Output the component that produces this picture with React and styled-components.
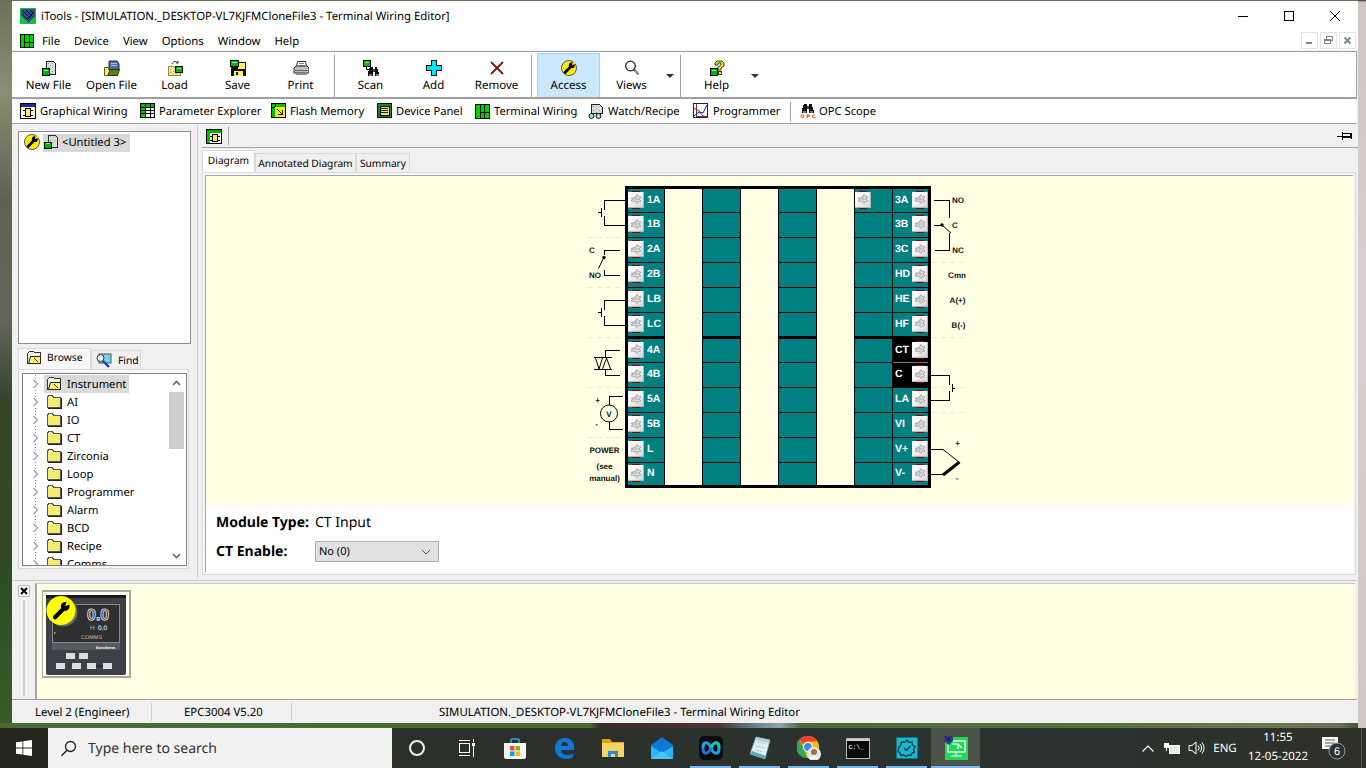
import React from 'react'
import styled, { createGlobalStyle } from 'styled-components'

const GlobalStyle = createGlobalStyle`
  html, body { margin: 0; padding: 0; overflow: hidden; }
  body {
    font-family: "Noto Sans", "Open Sans", sans-serif;
    font-size: 11.5px;
    color: #000;
    text-rendering: geometricPrecision;
  }
  * { box-sizing: border-box; }
`

const UI_FONT = '"Noto Sans", "Open Sans", sans-serif'
const CREAM = '#ffffe4'
const TEAL = '#008080'
const LINE = '#a0a0a0'

const Page = styled.div`
  width: 1366px;
  height: 768px;
  display: flex;
  flex-direction: column;
  overflow: hidden;
`

const Desktop = styled.div`
  height: 728px;
  padding: 1px 8px 5px 12px;
  background:
    linear-gradient(90deg, #4d6a33 0, #4a6a2e 590px, #3b2a26 600px, #4a3630 720px, #5f7788 750px, #8fa6b0 780px, #52683a 800px, #586f3b 1100px, #6c7a52 1280px, #706a60 1340px, transparent 1358px) 0 723px / 100% 5px no-repeat,
    linear-gradient(180deg, #2b2a20 0, #cfc5c3 2px, #d8cfd0 300px, #cfc8c4 728px) 1358px 0 / 8px 100% no-repeat,
    linear-gradient(180deg, #6d7157 0, #8b8d74 90px, #5e6350 200px, #62665a 320px, #35452a 400px, #2f4a22 560px, #3b5b2a 728px);
`

const Window = styled.div`
  height: 722px;
  background: #f0f0f0;
  display: flex;
  flex-direction: column;
`

const TitleBar = styled.div`
  height: 30px;
  background: #fff;
  display: flex;
  align-items: center;
  padding-left: 8px;
  font: 11.4px ${UI_FONT};
`

const TitleText = styled.span`
  margin-left: 5px;
`

const WindowControls = styled.div`
  margin-left: auto;
  display: flex;
  height: 100%;
`

const ControlButton = styled.div`
  width: 46px;
  height: 100%;
  display: flex;
  align-items: center;
  justify-content: center;
`

const MenuBar = styled.div`
  height: 19px;
  background: #fff;
  display: flex;
  align-items: center;
  padding-left: 8px;
  font: 11.3px ${UI_FONT};
`

const MenuItems = styled.div`
  display: flex;
  gap: 14px;
  margin-left: 8px;
  padding-top: 1px;
`

const MdiButtons = styled.div`
  margin-left: auto;
  display: flex;
  gap: 2px;
  margin-right: 2px;
`

const MdiButton = styled.div`
  width: 17px;
  height: 17px;
  border: 1px solid #e3e3e3;
  display: flex;
  align-items: center;
  justify-content: center;
`

const MainToolbar = styled.div`
  margin-top: 1px;
  height: 47px;
  margin-right: 1px;
  background: #fff;
  border: 1px solid ${LINE};
  border-left: 0;
  border-bottom: 0;
  display: flex;
  padding: 1px 0 0 5px;
  font-family: ${UI_FONT};
`

const ToolButton = styled.div`
  width: 63px;
  height: 45px;
  padding-top: 6px;
  display: flex;
  flex-direction: column;
  align-items: center;
  gap: 2px;
  border: 1px solid ${p => (p.$active ? '#99d1ff' : 'transparent')};
  background: ${p => (p.$active ? '#cce8ff' : 'transparent')};
`

const ToolSep = styled.div`
  width: 1px;
  height: 42px;
  margin: 2px ${p => p.$r}px 0 ${p => p.$l}px;
  background: ${LINE};
`

const Caret = styled.div`
  width: 12px;
  margin-left: 1px;
  display: flex;
  justify-content: center;
  padding-top: 21px;

  &::after {
    content: '';
    width: 0;
    height: 0;
    border-left: 4px solid transparent;
    border-right: 4px solid transparent;
    border-top: 4px solid #333;
  }
`

const ViewToolbar = styled.div`
  height: 26px;
  margin-right: 1px;
  background: #fff;
  border-top: 1px solid ${LINE};
  border-bottom: 1px solid ${LINE};
  box-shadow: 0 -1px 0 ${LINE};
  display: flex;
  align-items: center;
  padding-left: 8px;
  gap: 12px;
  font: 11.2px ${UI_FONT};
`

const ViewItem = styled.div`
  width: ${p => p.$w}px;
  display: flex;
  align-items: center;
  gap: ${p => p.$gap}px;
  white-space: nowrap;

  span { padding-top: 1px; }
`

const ViewSep = styled.div`
  width: 1px;
  height: 19px;
  margin: 0 -3px 0 -2px;
  background: ${LINE};
`

const Work = styled.div`
  height: 454px;
  display: flex;
`

const LeftPane = styled.div`
  width: 185px;
  padding: 7px 0 0 6px;
  font: 11.2px ${UI_FONT};
`

const TreeBox = styled.div`
  width: 173px;
  height: 213px;
  background: #fff;
  border: 1px solid #8c8c8c;
  padding: 2px 0 0 5px;
  display: flex;
  align-items: flex-start;
`

const TreeRoot = styled.div`
  display: flex;
  align-items: flex-start;
  gap: 3px;
  height: 19px;
`

const RootLabel = styled.div`
  height: 18px;
  width: 87px;
  background: #d9d9d9;
  display: flex;
  align-items: center;
  gap: 3px;
  padding: 0 0 1px 1px;
  white-space: nowrap;
`

const TabStrip = styled.div`
  display: flex;
  align-items: flex-end;
  height: 21px;
  margin-top: 4px;
  font-size: 10.3px;
`

const SideTab = styled.div`
  width: ${p => p.$w}px;
  height: ${p => (p.$active ? 21 : 19)}px;
  display: flex;
  align-items: center;
  gap: ${p => p.$gap}px;
  padding: ${p => (p.$active ? 0 : 1)}px 0 ${p => (p.$active ? 2 : 0)}px ${p => p.$pad}px;
  background: ${p => (p.$active ? '#f8f8f8' : '#f0f0f0')};
  border: 1px solid #d9d9d9;
  border-bottom: 0;
`

const SideTabBody = styled.div`
  width: 171px;
  height: 200px;
  border: 1px solid #d9d9d9;
  background: #f8f8f8;
  padding: 3px;
`

const TreeList = styled.div`
  width: 165px;
  height: 193px;
  background: #fff;
  border: 1px solid #808080;
  display: flex;
  overflow: hidden;
`

const TreeRows = styled.div`
  flex: 1;
  padding: 1px 0 0 7px;
  overflow: hidden;
`

const TreeRow = styled.div`
  height: 18px;
  display: flex;
  align-items: center;
`

const Expander = styled.div`
  width: 10px;
  height: 18px;
  display: flex;
  align-items: center;
  justify-content: center;
  margin-right: 4px;
  background: repeating-linear-gradient(180deg, #808080 0 1px, transparent 1px 3px) 5px 0 / 1px 100% no-repeat;
`

const NodeLabel = styled.div`
  height: 18px;
  display: flex;
  align-items: center;
  gap: 5px;
  width: ${p => (p.$selected ? '85px' : 'auto')};
  padding-left: 2px;
  background: ${p => (p.$selected ? '#d9d9d9' : 'transparent')};
  white-space: nowrap;
`

const ScrollTrack = styled.div`
  width: 15px;
  margin-right: 2px;
  background: #fff;
  display: flex;
  flex-direction: column;
  align-items: stretch;
`

const ScrollArrow = styled.div`
  height: 18px;
  display: flex;
  align-items: center;
  justify-content: center;
`

const ScrollThumb = styled.div`
  height: 57px;
  background: #cdcdcd;
`

const ScrollRest = styled.div`
  flex: 1;
`

const RightPane = styled.div`
  flex: 1;
  border-left: 1px solid #cfcfcf;
  padding-left: 3px;
  display: flex;
  flex-direction: column;
  min-width: 0;
`

const MiniToolbar = styled.div`
  height: 24px;
  margin-left: 1px;
  border-bottom: 1px solid ${LINE};
  display: flex;
  align-items: center;
  padding: 0 6px 0 4px;
`

const MiniSep = styled.div`
  width: 1px;
  height: 18px;
  margin-left: 6px;
  background: ${LINE};
`

const Pin = styled.div`
  margin-left: auto;
  display: flex;
`

const DocTabs = styled.div`
  height: 24px;
  display: flex;
  align-items: flex-end;
  padding-left: 1px;
  font-family: ${UI_FONT};
  font-size: 10.2px;
`

const DocTab = styled.div`
  height: ${p => (p.$active ? 22 : 19)}px;
  width: ${p => p.$w}px;
  display: flex;
  align-items: center;
  justify-content: center;
  padding-bottom: ${p => (p.$active ? 3 : 1)}px;
  background: ${p => (p.$active ? '#fff' : '#f0f0f0')};
  border: 1px solid #d9d9d9;
  border-bottom: 0;
  white-space: nowrap;
`

const DocPanel = styled.div`
  margin: 0 2px 0 1px;
  height: 403px;
  border: 1px solid #d9d9d9;
  padding: 2px;
  background: #f6f6f6;
`

const DocInner = styled.div`
  height: 100%;
  background: #fff;
  border-top: 1px solid #a8a8a8;
  border-left: 1px solid #a8a8a8;
  display: flex;
  flex-direction: column;
`

const DiagramArea = styled.div`
  height: 329px;
  background: ${CREAM};
  display: flex;
  justify-content: center;
  align-items: flex-start;
  padding: 10px 3px 0 0;
`

const Board = styled.div`
  width: 306px;
  height: 302px;
  flex: none;
  border: 3px solid #000;
  display: grid;
  grid-auto-flow: column;
  grid-template-columns: 37px 38px 38px 38px 38px 38px 38px 35px;
  grid-template-rows: 24px 25px 25px 25px 25px 26px 24px 25px 25px 25px 25px 22px;
  background: ${TEAL};
`

const Gap = styled.div`
  grid-row: 1 / -1;
  background: ${CREAM};
  border-right: 1px solid #000;
`

const Cell = styled.div`
  display: flex;
  align-items: center;
  justify-content: ${p => (p.$flip ? 'space-between' : 'flex-start')};
  background: ${p => (p.$black ? '#000' : TEAL)};
  border-bottom: ${p => (p.$row === 5 ? 3 : p.$row === 11 ? 0 : 1)}px solid ${p => (p.$sepGrey ? '#777' : '#000')};
  border-right: ${p => (p.$noRight ? 0 : 1)}px solid #000;
  color: #fff;
  font: bold 10.5px "Liberation Sans", Arial, sans-serif;
  padding: 0 0 2px ${p => (p.$flip ? 2 : 0)}px;
`

const CellLabel = styled.span`
  margin-left: ${p => (p.$flip ? 0 : 3)}px;
`

const Screw = styled.div`
  position: relative;
  width: 16px;
  height: 16px;
  flex: none;
  background: linear-gradient(135deg, #fff 0, #f2f2f2 50%, #d5d5d5 100%);
  border-right: 1px solid #b5b5b5;
  border-bottom: 1px solid #b5b5b5;
  display: flex;
  align-items: center;
  justify-content: center;

  &::before, &::after {
    content: '';
    position: absolute;
    left: 4px;
    width: 8px;
    height: 1px;
    background: #8b0000;
  }
  &::before { top: -1px; }
  &::after { bottom: -2px; }
`

const Wires = styled.svg`
  flex: none;
  display: block;
  overflow: visible;
  font-family: "Liberation Sans", Arial, sans-serif;
`

const InfoPanel = styled.div`
  flex: 1;
  padding: 7px 0 0 10px;
  font-family: ${UI_FONT};
`

const InfoRow = styled.div`
  display: flex;
  align-items: center;
  height: 21px;
  margin-bottom: 8px;
  font-size: 14px;
`

const InfoLabel = styled.span`
  width: 99px;
  font-weight: 700;
  white-space: nowrap;
`

const Select = styled.div`
  width: 124px;
  height: 21px;
  background: #e1e1e1;
  border: 1px solid #adadad;
  display: flex;
  align-items: center;
  justify-content: space-between;
  padding: 0 7px 0 3px;
  font-size: 11px;
`

const Dock = styled.div`
  height: 120px;
  margin-top: 2px;
  margin-right: 1px;
  border-top: 1px solid #c8c8c8;
  border-bottom: 1px solid ${LINE};
  display: flex;
`

const DockSide = styled.div`
  width: 23px;
  padding: 4px 0 0 6px;
  display: flex;
  flex-direction: column;
  gap: 3px;
`

const DockClose = styled.div`
  width: 12px;
  height: 12px;
  border: 1px solid #bdbdbd;
  background: #f5f5f5;
  display: flex;
  align-items: center;
  justify-content: center;
`

const DockGrip = styled.div`
  width: 2px;
  height: 96px;
  margin-left: 5px;
  background: #d0d0d0;
`

const DockBody = styled.div`
  flex: 1;
  margin: 2px 2px 0 0;
  background: ${CREAM};
  border-left: 2px solid #a8a8a8;
  border-top: 1px solid #c8c8c8;
  padding: 6px 0 0 5px;
`

const DeviceFrame = styled.div`
  width: 89px;
  height: 88px;
  padding: 3px 4px 3px 3px;
  border: 2px solid #a6a6a6;
  border-left-width: 1px;
  box-shadow: inset 1px 1px 0 #fff;
`

const StatusBar = styled.div`
  flex: 1;
  display: flex;
  align-items: center;
  font: 11.4px ${UI_FONT};
`

const StatusCell = styled.div`
  width: ${p => p.$w}px;
  height: 18px;
  display: flex;
  align-items: center;
  padding: 1px 0 0 ${p => p.$pad}px;
  border-right: ${p => (p.$plain ? 0 : 1)}px solid #d0d0d0;
  white-space: nowrap;
`

const Taskbar = styled.div`
  height: 40px;
  background: linear-gradient(90deg, #2a2e24 0, #2b302a 40%, #2b3331 70%, #2e3028 100%);
  display: flex;
  color: #fff;
`

const StartButton = styled.div`
  width: 48px;
  display: flex;
  align-items: center;
  justify-content: center;
  background: #23271d;
`

const SearchBox = styled.div`
  width: 344px;
  background: #f2f2f2;
  display: flex;
  align-items: center;
  gap: 11px;
  padding: 1px 0 0 12px;
  color: #333;
  font: 14px ${UI_FONT};
`

const TaskIcon = styled.div`
  position: relative;
  width: 49px;
  display: flex;
  align-items: center;
  justify-content: center;
  background: ${p => (p.$active ? '#4e5449' : 'transparent')};

  &::after {
    content: '';
    display: ${p => (p.$running ? 'block' : 'none')};
    position: absolute;
    bottom: 0;
    left: ${p => (p.$active ? 0 : 4)}px;
    right: ${p => (p.$active ? 0 : 4)}px;
    height: 2px;
    background: #76b9ed;
  }
`

const Tray = styled.div`
  margin-left: auto;
  display: flex;
  align-items: center;
  font: 11.5px ${UI_FONT};
`

const TraySlot = styled.div`
  width: ${p => p.$w}px;
  display: flex;
  align-items: center;
  justify-content: center;
`

const Clock = styled.div`
  width: 72px;
  padding-bottom: 2px;
  text-align: center;
  line-height: 19px;
`

const ShowDesktop = styled.div`
  width: 1px;
  height: 100%;
  margin: 0 4px 0 7px;
  background: #555;
`

/* ---- icons ---- */

const Icon = ({ size = 16, children, crisp = true, box = 16 }) => (
  <svg width={size} height={size} viewBox={`0 0 ${box} ${box}`} shapeRendering={crisp ? 'crispEdges' : 'auto'} style={{ display: 'block', flex: 'none' }}>
    {children}
  </svg>
)

const Chip = ({ x, y, w = 7, h = 6 }) => (
  <g>
    <rect x={x + 0.5} y={y + 0.5} width={w} height={h} fill="#00b400" stroke="#000" />
    <rect x={x + 2} y={y + 2} width={w - 3} height={1} fill="#80ff80" />
  </g>
)

const AppLogo = () => (
  <Icon>
    <rect width="16" height="16" fill="#12c23b" />
    <path d="M1 1h14v7l-7 7-7-7z" fill="#2d4d8c" />
    <path d="M3 3l5 5M6 2l6 6M10 2l3 3M2 6l5 5M11 8l-3 3M14 4L8 10" stroke="#0e1a33" strokeWidth="1" shapeRendering="auto" />
  </Icon>
)

const GridLogo = ({ size = 14 }) => (
  <Icon size={size}>
    <rect width="16" height="16" fill="#00d000" />
    <path d="M.5 0v16M5.5 0v16M10.5 0v16M15.5 0v16M0 .5h16M0 15.5h16M5 9.5h11" stroke="#000" fill="none" />
  </Icon>
)

const NewFileIcon = () => (
  <Icon>
    <path d="M5.5 1.5h7l2 2v11h-9z" fill="#dcdcdc" stroke="#222" />
    <path d="M7 3h1M9 5h1M11 3h1M7 7h1M11 7h1M9 9h1M11 11h1M9 13h1" stroke="#999" />
    <Chip x={1} y={8} w={7} h={7} />
  </Icon>
)

const OpenFileIcon = () => (
  <Icon>
    <path d="M5 1h8l2 3v6H5z" fill="#4c6fa8" stroke="#1b2a4a" shapeRendering="auto" />
    <path d="M7 3h6M7 5h6" stroke="#a8bcdc" />
    <path d="M0.5 7.5h4v2h3l-2 6h-5z" fill="#ffe97f" stroke="#5c5a10" shapeRendering="auto" />
    <path d="M4 15.5l2-6h9.5l-2 6z" fill="#5f7f18" stroke="#243300" shapeRendering="auto" />
  </Icon>
)

const LoadIcon = () => (
  <Icon>
    <path d="M1 6h5l1 1h6v8H1z" fill="#f5e28a" stroke="#8d8a4a" />
    <path d="M3 9h1M6 11h1M3 12h1M9 13h1" stroke="#b8a640" />
    <Chip x={8} y={6} w={7} h={6} />
    <path d="M5 4c1-3 5-3 6-1M11 1v2H9" fill="none" stroke="#333" shapeRendering="auto" />
  </Icon>
)

const SaveIcon = () => (
  <Icon>
    <rect x="1" y="2" width="15" height="14" fill="#111" />
    <rect x="8" y="3" width="7" height="6" fill="#ffef6a" />
    <rect x="4" y="11" width="9" height="5" fill="#ffef6a" />
    <rect x="6" y="12" width="2" height="3" fill="#111" />
    <Chip x={0} y={0} w={8} h={6} />
  </Icon>
)

const PrintIcon = () => (
  <Icon>
    <path d="M4.5 1.5h8l1 5h-10z" fill="#fff" stroke="#333" shapeRendering="auto" />
    <path d="M6 3h5M6 5h5" stroke="#888" />
    <path d="M1 8l2-2h11l2 2v5H1z" fill="#bfbfbf" stroke="#333" shapeRendering="auto" />
    <rect x="2" y="10" width="13" height="1" fill="#666" />
    <rect x="3" y="13" width="11" height="2" fill="#8c8c8c" />
  </Icon>
)

const Binoculars = ({ x = 0, y = 0, s = 1 }) => (
  <g transform={`translate(${x} ${y}) scale(${s})`}>
    <path d="M1 4l1-3h3v9H0v-3zM10 4l-1-3H6.500v9H11v-3z" fill="#111" />
    <rect x="1" y="8" width="3" height="2" fill="#777" />
    <rect x="7.500" y="8" width="3" height="2" fill="#777" />
    <rect x="5" y="3" width="1.500" height="3" fill="#444" />
  </g>
)

const ScanIcon = () => (
  <Icon>
    <Chip x={0} y={0} w={7} h={6} />
    <path d="M3 6v3h3" stroke="#000" fill="none" />
    <Binoculars x={5} y={6} s={1} />
  </Icon>
)

const AddIcon = () => (
  <Icon>
    <path d="M5.5 .5h5v5h5v5h-5v5h-5v-5h-5v-5h5z" fill="#00e5ff" stroke="#111" />
  </Icon>
)

const RemoveIcon = () => (
  <Icon crisp={false}>
    <path d="M2 2l12 12M14 2L2 14" stroke="#7a1616" strokeWidth="1.800" />
  </Icon>
)

const WrenchMark = () => (
  <g>
    <path d="M4 12.500L9.500 7" stroke="#000" strokeWidth="2.800" strokeLinecap="round" />
    <circle cx="10.800" cy="5.200" r="2.900" fill="#000" />
    <path d="M10.800 5.200l1-3.500 3 1.800z" fill="#ffee00" />
  </g>
)

const AccessIcon = () => (
  <Icon crisp={false}>
    <circle cx="8" cy="8" r="7.500" fill="#ffee00" stroke="#555" />
    <WrenchMark />
  </Icon>
)

const ViewsIcon = () => (
  <Icon crisp={false}>
    <circle cx="6.500" cy="6" r="4.800" fill="#fff" stroke="#222" strokeWidth="1.300" />
    <path d="M10 9.500l4.500 4.800" stroke="#555" strokeWidth="2.200" />
    <path d="M11 10.500l3 3.200" stroke="#e8dc6a" strokeWidth="1" />
  </Icon>
)

const HelpIcon = () => (
  <Icon>
    <path d="M6 3l2-2h5l2 2v3l-3 2v2H9V7l3-2V3H9v2H6z" fill="#ffee00" stroke="#333" shapeRendering="auto" />
    <rect x="9" y="11" width="3" height="3" fill="#ffee00" stroke="#333" />
    <Chip x={1} y={8} w={7} h={7} />
  </Icon>
)

const WiringIcon = () => (
  <Icon>
    <rect x=".5" y=".5" width="15" height="15" fill="#ffffd8" stroke="#000" />
    <rect x="1" y="1" width="14" height="3" fill="#1b2a9c" />
    <rect x="5.500" y="5.500" width="5" height="8" fill="#ffe94d" stroke="#000" />
    <path d="M3 7h2M3 12h2M11 7h2M11 12h2" stroke="#000" />
  </Icon>
)

const WiringIconGreen = () => (
  <Icon>
    <rect x=".5" y="1.500" width="15" height="14" fill="#fff" stroke="#000" />
    <rect x="1" y="2" width="14" height="3" fill="#00b000" />
    <rect x="1" y="5" width="3" height="10" fill="#00c000" />
    <rect x="6.500" y="6.500" width="5" height="7" fill="#ffe94d" stroke="#000" />
    <path d="M4 8h2M4 12h2M12 8h2M12 12h2" stroke="#000" />
  </Icon>
)

const TableIcon = () => (
  <Icon>
    <rect x=".5" y=".5" width="14" height="14" fill="#e8ffe8" stroke="#000" />
    <rect x="1" y="1" width="13" height="3" fill="#00b800" />
    <rect x="1" y="4" width="4" height="10" fill="#00d000" />
    <path d="M5.500 0v15M10 0v15M0 4.500h15M0 7.500h15M0 10.500h15" stroke="#000" />
  </Icon>
)

const FlashIcon = () => (
  <Icon>
    <rect x=".5" y=".5" width="14" height="14" fill="#00c000" stroke="#000" />
    <rect x="4" y="4" width="10" height="10" fill="#ffee00" />
    <path d="M0 4.500h4M4.500 0v4" stroke="#000" />
    <path d="M6 6l5 5M11 7v4H7" stroke="#000" fill="none" />
  </Icon>
)

const PanelIcon = () => (
  <Icon>
    <rect x=".5" y=".5" width="14" height="14" fill="#0a8f2a" stroke="#000" />
    <rect x="3" y="3" width="9" height="9" fill="#f0e76a" stroke="#000" />
    <path d="M4 5.500h7M4 7.500h7M4 9.500h7" stroke="#222" />
  </Icon>
)

const WatchIcon = () => (
  <Icon>
    <path d="M3.500 1.500h8l3 3v6h-11z" fill="#d9d9d9" stroke="#222" />
    <path d="M5 3h1M8 5h1M5 7h1M11 7h1M8 9h1" stroke="#888" />
    <circle cx="3.500" cy="13" r="2.500" fill="#9de3e3" stroke="#111" shapeRendering="auto" />
    <circle cx="10.500" cy="13" r="2.500" fill="#9de3e3" stroke="#111" shapeRendering="auto" />
  </Icon>
)

const ChartIcon = () => (
  <Icon>
    <rect x=".5" y=".5" width="14" height="14" fill="#fff" stroke="#222" />
    <path d="M3 1v12h11" stroke="#444" fill="none" />
    <path d="M1 5l5 3 4 5 4 1" stroke="#d01414" fill="none" shapeRendering="auto" />
    <path d="M1 13l5-4 4 1 4-8" stroke="#1a1aa8" fill="none" shapeRendering="auto" />
  </Icon>
)

const OpcIcon = () => (
  <Icon>
    <Binoculars x={2} y={-0.5} s={1.050} />
    <text x="0.500" y="15" fontSize="5" fontWeight="700" fill="#e00000" textLength="15" fontFamily="Liberation Sans">OPC</text>
  </Icon>
)

const UntitledIcon = () => (
  <Icon size={15}>
    <path d="M4.500 .5h8l2 2v11h-10z" fill="#dcdcdc" stroke="#222" />
    <path d="M6 2h1M8 4h1M11 2h1M6 6h1M11 6h1M9 8h1" stroke="#999" />
    <Chip x={0} y={7} w={7} h={7} />
  </Icon>
)

const Folder = ({ open }) => (
  <Icon>
    {open ? (
      <g>
        <path d="M1.500 3.500l2-2h4l1 1h6v11h-13z" fill="#eee" stroke="#333" />
        <path d="M2.500 13.500l2-7h10v7z" fill="#ffee66" stroke="#222" shapeRendering="auto" />
        <path d="M8 8l4 4" stroke="#333" />
      </g>
    ) : (
      <g>
        <path d="M1.500 3.500l1-2h4l1 2h7v10h-13z" fill="#fff5a0" stroke="#555" />
        <rect x="2" y="4" width="12" height="9" fill="#f4ec6e" />
        <path d="M15.500 4v10M2 14.500h14" stroke="#222" />
      </g>
    )}
  </Icon>
)

const FindIcon = () => (
  <Icon crisp={false}>
    <rect x="3" y="1" width="12" height="9" fill="#6fd8e8" stroke="#555" />
    <circle cx="4.500" cy="5" r="3.500" fill="#eee" stroke="#333" />
    <path d="M7 8l6 6" stroke="#1a3cc8" strokeWidth="2.400" />
  </Icon>
)

const Chevron = ({ down, color = '#666' }) => (
  <svg width="9" height="6" viewBox="0 0 9 6" style={{ display: 'block', transform: down ? 'rotate(180deg)' : 'none' }}>
    <path d="M1 5l3.500-3.500L8 5" fill="none" stroke={color} strokeWidth="1.600" />
  </svg>
)

const TreeChevron = () => (
  <svg width="7" height="10" viewBox="0 0 7 10" style={{ display: 'block', background: '#fff' }}>
    <path d="M1.500 1l4 4-4 4" fill="none" stroke="#a6a6a6" strokeWidth="1.500" />
  </svg>
)

const ScrewGlyph = () => (
  <svg width="12" height="12" viewBox="0 0 12 12" style={{ display: 'block' }}>
    <path d="M1 5.500l4-1 2-3 1 2 3 .5-2 2 2 2-3 .500-1 2-2-2-4-.500 2-1.500z" fill="#e6e6e6" stroke="#9a9a9a" strokeWidth=".8" />
    <path d="M2 6h8M6 3v6" stroke="#a9a9a9" strokeWidth=".8" />
  </svg>
)

const SelectArrow = () => (
  <svg width="10" height="6" viewBox="0 0 10 6" style={{ display: 'block' }}>
    <path d="M1 1l4 4 4-4" fill="none" stroke="#555" strokeWidth="1" />
  </svg>
)

const PinIcon = () => (
  <svg width="15" height="10" viewBox="0 0 15 10" shapeRendering="crispEdges" style={{ display: 'block' }}>
    <path d="M0 5h5M5.500 1v8M6 2.500h7v4H6M6 5.500h7M14 2v6" stroke="#000" fill="none" />
  </svg>
)

const DeviceThumb = () => (
  <svg width="80" height="80" viewBox="0 0 80 80" style={{ display: 'block' }} fontFamily="Liberation Sans">
    <rect width="80" height="80" rx="2" fill="#3c4147" />
    <rect x="0" y="0" width="80" height="3" fill="#1a1a1a" />
    <rect x="6.500" y="9.500" width="67" height="38" fill="#2f2f2f" stroke="#8a8a8a" />
    <rect x="6" y="48" width="68" height="7" fill="#565a5e" />
    <text x="50" y="53.500" fontSize="3.800" fontWeight="700" fill="#fff">Eurotherm</text>
    <text x="41" y="25" fontSize="16" fontWeight="700" fill="#2f2f2f" stroke="#e8f0ff" strokeWidth=".8">0.0</text>
    <text x="44" y="35" fontSize="6.500" fill="#9cc0e0">H</text>
    <text x="52" y="35" fontSize="6.500" fill="#2f2f2f" stroke="#9cc0e0" strokeWidth=".5">0.0</text>
    <text x="35" y="43.500" fontSize="5.500" fill="#c9bbab">COMMS</text>
    <rect x="8" y="37" width="1.500" height="2" fill="#e08a10" />
    {[[20, 58], [33, 58], [10, 68], [26, 68], [41, 68], [57, 68]].map(([x, y]) => (
      <rect key={`${x}-${y}`} x={x} y={y} width="9" height="6" fill="#dcdcdc" />
    ))}
    <rect x="50" y="70.500" width="7" height="1" fill="#111" />
    <circle cx="17" cy="17" r="14.500" fill="#666a6e" />
    <circle cx="15" cy="15.500" r="14.500" fill="#ffff00" />
    <g transform="translate(3 3.500) scale(1.500)"><WrenchMark /></g>
  </svg>
)

const WinControl = ({ kind }) => (
  <svg width="12" height="12" viewBox="0 0 12 12" shapeRendering="crispEdges" style={{ display: 'block' }}>
    {kind === 'min' && <path d="M1 6.500h10" stroke="#000" />}
    {kind === 'max' && <rect x="1.500" y="1.500" width="9" height="9" fill="none" stroke="#000" />}
    {kind === 'close' && <path d="M1 1l10 10M11 1L1 11" stroke="#000" shapeRendering="auto" />}
  </svg>
)

const MdiGlyph = ({ kind }) => (
  <svg width="9" height="9" viewBox="0 0 9 9" shapeRendering="crispEdges" style={{ display: 'block' }}>
    {kind === 'min' && <rect x="1" y="6" width="6" height="2" fill="#7c8794" />}
    {kind === 'restore' && <path d="M2.500 2.500V.5h6v4h-2M.5 3.500h6v4h-6zM.5 4.500h6" fill="none" stroke="#7c8794" />}
    {kind === 'close' && <path d="M1.500 1.500l6 6M7.500 1.500l-6 6" stroke="#7c8794" strokeWidth="2" shapeRendering="auto" />}
  </svg>
)

const CloseMini = () => (
  <svg width="8" height="8" viewBox="0 0 8 8" style={{ display: 'block' }}>
    <path d="M1 1l6 6M7 1L1 7" stroke="#000" strokeWidth="1.800" />
  </svg>
)

/* ---- taskbar icons ---- */

const WinLogo = () => (
  <svg width="16" height="16" viewBox="0 0 16 16" style={{ display: 'block' }}>
    <path d="M0 2.300l6.500-.9v6.200H0zM7.300 1.300L16 0v7.600H7.300zM0 8.400h6.500v6.200L0 13.700zM7.300 8.400H16V16l-8.700-1.300z" fill="#fff" />
  </svg>
)

const SearchGlass = () => (
  <svg width="17" height="17" viewBox="0 0 17 17" style={{ display: 'block' }}>
    <circle cx="10.500" cy="6.500" r="5" fill="none" stroke="#222" strokeWidth="1.300" />
    <path d="M7 10.200l-5.500 5.500" stroke="#222" strokeWidth="1.400" />
  </svg>
)

const TaskGlyph = ({ name }) => {
  const svg = { width: 24, height: 24, viewBox: '0 0 24 24', style: { display: 'block' } }
  switch (name) {
    case 'cortana':
      return <svg {...svg}><circle cx="12" cy="12" r="7" fill="none" stroke="#eee" strokeWidth="2" /></svg>
    case 'taskview':
      return (
        <svg {...svg} shapeRendering="crispEdges">
          <rect x="5.500" y="7.500" width="10" height="9" fill="none" stroke="#fff" />
          <path d="M5 4.500h11M5 19.500h11M19.500 3v3M19.500 10v11" stroke="#fff" />
          <rect x="18" y="7" width="3" height="3" fill="#fff" />
        </svg>
      )
    case 'store':
      return (
        <svg {...svg}>
          <path d="M8 8V4a1 1 0 0 1 1-1h6a1 1 0 0 1 1 1v4" fill="none" stroke="#29a8ef" strokeWidth="1.500" />
          <path d="M1 7h22v14a2 2 0 0 1-2 2H3a2 2 0 0 1-2-2z" fill="#f5f5f5" />
          <rect x="7" y="10" width="4.500" height="4.500" fill="#f25022" />
          <rect x="12.500" y="10" width="4.500" height="4.500" fill="#7fba00" />
          <rect x="7" y="15.500" width="4.500" height="4.500" fill="#00a4ef" />
          <rect x="12.500" y="15.500" width="4.500" height="4.500" fill="#ffb900" />
        </svg>
      )
    case 'edge':
      return (
        <svg {...svg}>
          <path d="M3 12C3 6 7 2 13 2c5 0 9 3 9 9v3H9c.5 3.500 3 5 6 5 2.500 0 4.500-.7 6-1.700v4C19 22.500 17 23 14.500 23 8 23 3 19 3 12zM9 10h7c0-2.500-1.500-4-3.500-4S9 7.500 9 10z" fill="#0f78d4" />
        </svg>
      )
    case 'explorer':
      return (
        <svg {...svg}>
          <path d="M1 3h8l2 3h12v5H1z" fill="#e0a020" />
          <path d="M1 7h22v14H1z" fill="#f7d564" />
          <path d="M7 21v-6h10v6h-3v-3h-4v3z" fill="#2a8ad4" />
        </svg>
      )
    case 'mail':
      return (
        <svg {...svg}>
          <path d="M1 9l11-8 11 8v14H1z" fill="#0f78d4" />
          <path d="M1 10l11 7 11-7v13H1z" fill="#29b6f6" />
          <path d="M1 23l11-8 11 8z" fill="#4fc3f7" />
        </svg>
      )
    case 'webex':
      return (
        <svg {...svg}>
          <rect x="0" y="0" width="24" height="24" rx="5" fill="#0c0c10" />
          <path d="M4 12c0-7 5-7 8 0s8 7 8 0" fill="none" stroke="#1ea7e1" strokeWidth="3" />
          <path d="M4 12c0 7 5 7 8 0s8-7 8 0" fill="none" stroke="#2a6fe0" strokeWidth="3" />
          <path d="M12 12c3-7 8-7 8 0" fill="none" stroke="#10c8b0" strokeWidth="3" />
        </svg>
      )
    case 'notepad':
      return (
        <svg {...svg}>
          <path d="M8 1l14 3-5 19L2 18z" fill="#dff1f7" stroke="#88a8b0" strokeWidth=".6" />
          <path d="M2 18l15 5 1-3-14-5z" fill="#5fa8b0" />
          <path d="M9 6l9 2M8 10l9 2M7 14l8 2" stroke="#b5ccd4" strokeWidth="1" />
          <path d="M8 1l14 3-1 3-14-3z" fill="#aad0dc" />
        </svg>
      )
    case 'chrome':
      return (
        <svg {...svg}>
          <circle cx="11" cy="11" r="11" fill="#fbbc05" />
          <path d="M11 0a11 11 0 0 1 9.500 5.500H11a5.500 5.500 0 0 0-5 3L2 3.500A11 11 0 0 1 11 0z" fill="#ea4335" />
          <path d="M2 3.500L6.500 12l4 10A11 11 0 0 1 2 3.500z" fill="#34a853" />
          <circle cx="11" cy="11" r="4.500" fill="#4285f4" stroke="#fff" strokeWidth="1.200" />
          <circle cx="17" cy="18" r="7" fill="#e6e6e6" />
          <circle cx="17" cy="16" r="3" fill="#9b6b50" />
          <path d="M12 23c1-4 9-4 10 0z" fill="#f5f5f5" />
        </svg>
      )
    case 'terminal':
      return (
        <svg {...svg}>
          <rect x=".5" y="2.500" width="23" height="20" fill="#0a0a0a" stroke="#b8b8b8" />
          <rect x="1" y="3" width="22" height="2" fill="#cfcfcf" />
          <text x="2.500" y="12.500" fontSize="6.500" fontWeight="700" fill="#d0d0d0" fontFamily="Liberation Mono">C:\_</text>
        </svg>
      )
    case 'gear':
      return (
        <svg {...svg}>
          <rect x="0" y="0" width="24" height="24" fill="#0f3a45" />
          <rect x="1.500" y="1.500" width="21" height="21" fill="#1fb6c8" />
          <path d="M12 4l2 2.500 3-.500.500 3L20 11l-1.500 2.500L19.500 16l-2.500 1-1 2.500-3-.500-2 1.500-2-1.500-3 .500-1-2.500-2-1.500L4 11l2-2 .500-3 3 .500z" fill="none" stroke="#0c4a5a" strokeWidth="1.500" />
          <path d="M9 12l2.500 2.500L15.500 10" fill="none" stroke="#0c4a5a" strokeWidth="1.500" />
        </svg>
      )
    case 'itools':
      return (
        <svg {...svg}>
          <rect x="1" y="1" width="23" height="23" fill="#26d65a" />
          <rect x="4" y="5" width="17" height="11" fill="none" stroke="#fff" strokeWidth="1.200" />
          <path d="M12 16v3M7 20h11M8 8h6v5M14 8l4 4" fill="none" stroke="#fff" strokeWidth="1.200" />
          <path d="M0 0h9v5L4.500 9 0 5z" fill="#2d3f80" />
          <path d="M1 1l6 4M7 1L2 5" stroke="#0e1a33" />
        </svg>
      )
    default:
      return null
  }
}

const TrayUp = () => (
  <svg width="12" height="7" viewBox="0 0 12 7" style={{ display: 'block' }}>
    <path d="M.5 6.500L6 1l5.500 5.500" fill="none" stroke="#fff" strokeWidth="1.100" />
  </svg>
)

const TrayBattery = () => (
  <svg width="16" height="12" viewBox="0 0 16 12" style={{ display: 'block' }} shapeRendering="crispEdges">
    <rect x="0" y="1" width="5" height="5" fill="#fff" />
    <path d="M2.500 6v3" stroke="#fff" />
    <rect x="5" y="3" width="10" height="8" fill="#e8e8e8" stroke="#fff" />
  </svg>
)

const TraySpeaker = () => (
  <svg width="17" height="14" viewBox="0 0 17 14" style={{ display: 'block' }}>
    <path d="M1 4.500h3L8 1v12L4 9.500H1z" fill="none" stroke="#fff" />
    <path d="M10 4.500a3.500 3.500 0 0 1 0 5M12 3a6 6 0 0 1 0 8M14 1.500a8.500 8.500 0 0 1 0 11" fill="none" stroke="#fff" />
  </svg>
)

const TrayNotes = () => (
  <svg width="26" height="26" viewBox="0 0 26 26" style={{ display: 'block' }} fontFamily="Liberation Sans">
    <path d="M1 2h16v12h-6l-3 3v-3H1z" fill="#fff" />
    <path d="M4 5h10M4 8h10M4 11h7" stroke="#555" />
    <circle cx="16" cy="16" r="8" fill="#2b3030" stroke="#999" />
    <text x="16" y="20" fontSize="11" textAnchor="middle" fill="#fff">6</text>
  </svg>
)

/* ---- data ---- */

const tools = [
  ['New File', NewFileIcon],
  ['Open File', OpenFileIcon],
  ['Load', LoadIcon],
  ['Save', SaveIcon],
  ['Print', PrintIcon],
  { l: 2, r: 4 },
  ['Scan', ScanIcon],
  ['Add', AddIcon],
  ['Remove', RemoveIcon],
  { l: 3, r: 5 },
  ['Access', AccessIcon, true],
  ['Views', ViewsIcon],
  'caret',
  { l: 4, r: 4 },
  ['Help', HelpIcon],
  'caret',
]

const views = [
  ['Graphical Wiring', WiringIcon, 108, 4],
  ['Parameter Explorer', TableIcon, 119, 3],
  ['Flash Memory', FlashIcon, 94, 3],
  ['Device Panel', PanelIcon, 86, 3],
  ['Terminal Wiring', () => <GridLogo size={15} />, 101, 4],
  ['Watch/Recipe', WatchIcon, 93, 4],
  ['Programmer', ChartIcon, 87, 4],
  'sep',
  ['OPC Scope', OpcIcon, 90, 3],
]

const nodes = ['Instrument', 'AI', 'IO', 'CT', 'Zirconia', 'Loop', 'Programmer', 'Alarm', 'BCD', 'Recipe', 'Comms']

const leftLabels = ['1A', '1B', '2A', '2B', 'LB', 'LC', '4A', '4B', '5A', '5B', 'L', 'N']
const rightLabels = ['3A', '3B', '3C', 'HD', 'HE', 'HF', 'CT', 'C', 'LA', 'VI', 'V+', 'V-']
const rows = leftLabels.map((_, i) => i)
const taskIcons = [
  ['cortana'], ['taskview'], ['store'], ['edge'], ['explorer'], ['mail'],
  ['webex', true], ['notepad', true], ['chrome', true], ['terminal', true], ['gear', true], ['itools', true, true],
]

const wire = { fill: 'none', stroke: '#000', strokeWidth: 1, shapeRendering: 'crispEdges' }
const slant = { fill: 'none', stroke: '#000', strokeWidth: 1 }
const note = { fontSize: 8, fontWeight: 700, fill: '#111', textAnchor: 'middle' }
const fade = { stroke: '#e9e9d0', strokeWidth: 1, strokeDasharray: '5 4', shapeRendering: 'crispEdges' }

const LeftWires = () => (
  <Wires width="45" height="302" viewBox="580 186 45 302">
    {[237.5, 287.5, 337.5, 387.5, 437.5].map(y => <path key={y} d={`M588 ${y}h36`} {...fade} />)}
    {[0, 100].map(d => (
      <g key={d} transform={`translate(0 ${d})`}>
        <path d="M625 200.500H604.500V210M604.500 216V225.500H625M601.500 208v9" {...wire} />
        <path d="M598 212.500h3" {...wire} />
      </g>
    ))}
    <text x="592" y="253" {...note}>C</text>
    <text x="595" y="278" {...note}>NO</text>
    <path d="M620 250.500H604.500V255M604.500 270V275.500H620" {...wire} />
    <path d="M598.500 268.500L604 257" {...slant} />
    <circle cx="604" cy="257.500" r="1.700" fill="#000" />
    <path d="M620 350.500H605.500V357M605.500 369V375.500H620M594 357.500h18M594 369.500h18" {...wire} />
    <path d="M595.500 358l3.500 11 3.500-11M602.500 369l4-11 4 11" {...slant} />
    <text x="597.500" y="403" {...note}>+</text>
    <text x="596.500" y="427" {...note}>-</text>
    <path d="M623 396.500H609.500V405M609.500 422V429.500H623" {...wire} />
    <circle cx="609" cy="413.500" r="8.500" fill="none" stroke="#000" />
    <text x="609" y="416.500" {...note}>V</text>
    <text x="604.500" y="453" {...note}>POWER</text>
    <text x="604.500" y="469" {...note}>(see</text>
    <text x="604.500" y="481" {...note}>manual)</text>
  </Wires>
)

const RightWires = () => (
  <Wires width="45" height="302" viewBox="931 186 45 302">
    {[262.5, 337.5, 387.5, 412.5].map(y => <path key={y} d={`M932 ${y}h36`} {...fade} />)}
    <path d="M934 200.500H949.500V217.500M935 250.500H949.500V233M934 225.500H941" {...wire} />
    <path d="M942 225l9 8" {...slant} />
    <circle cx="942" cy="225" r="1.700" fill="#000" />
    <text x="958" y="203" {...note}>NO</text>
    <text x="955" y="228" {...note}>C</text>
    <text x="958" y="253" {...note}>NC</text>
    <text x="957" y="278" {...note}>Cmn</text>
    <text x="957.500" y="303" {...note}>A(+)</text>
    <text x="958.500" y="328" {...note}>B(-)</text>
    <path d="M931 375.500H949.500V384.500M949.500 391V400.500H931M952.500 384v8M953 388.500h2" {...wire} />
    <path d="M931 449.500h12M931 474.500h12" {...wire} />
    <path d="M943 449.500L959 462" {...slant} />
    <path d="M943 475l16.500-13" fill="none" stroke="#000" strokeWidth="3" />
    <text x="957.500" y="446" {...note}>+</text>
    <text x="957" y="481" {...note}>-</text>
  </Wires>
)

const App = () => (
  <Page>
    <GlobalStyle />
    <Desktop>
      <Window>
        <TitleBar>
          <AppLogo />
          <TitleText>iTools - [SIMULATION._DESKTOP-VL7KJFMCloneFile3 - Terminal Wiring Editor]</TitleText>
          <WindowControls>
            <ControlButton><WinControl kind="min" /></ControlButton>
            <ControlButton><WinControl kind="max" /></ControlButton>
            <ControlButton><WinControl kind="close" /></ControlButton>
          </WindowControls>
        </TitleBar>
        <MenuBar>
          <GridLogo />
          <MenuItems>
            {['File', 'Device', 'View', 'Options', 'Window', 'Help'].map(m => <span key={m}>{m}</span>)}
          </MenuItems>
          <MdiButtons>
            {['min', 'restore', 'close'].map(k => <MdiButton key={k}><MdiGlyph kind={k} /></MdiButton>)}
          </MdiButtons>
        </MenuBar>
        <MainToolbar>
          {tools.map((t, i) => {
            if (t === 'caret') return <Caret key={i} />
            if (!Array.isArray(t)) return <ToolSep key={i} $l={t.l} $r={t.r} />
            const [label, Glyph, active] = t
            return (
              <ToolButton key={label} $active={active}>
                <Glyph />
                <span>{label}</span>
              </ToolButton>
            )
          })}
        </MainToolbar>
        <ViewToolbar>
          {views.map((v, i) => {
            if (v === 'sep') return <ViewSep key={i} />
            const [label, Glyph, w, gap] = v
            return (
              <ViewItem key={label} $w={w} $gap={gap}>
                <Glyph />
                <span>{label}</span>
              </ViewItem>
            )
          })}
        </ViewToolbar>
        <Work>
          <LeftPane>
            <TreeBox>
              <TreeRoot>
                <AccessIcon />
                <RootLabel>
                  <UntitledIcon />
                  <span>&lt;Untitled 3&gt;</span>
                </RootLabel>
              </TreeRoot>
            </TreeBox>
            <TabStrip>
              <SideTab $active $w={73} $pad={7} $gap={5}><Folder open /><span>Browse</span></SideTab>
              <SideTab $w={50} $pad={4} $gap={6}><FindIcon /><span>Find</span></SideTab>
            </TabStrip>
            <SideTabBody>
              <TreeList>
                <TreeRows>
                  {nodes.map((n, i) => (
                    <TreeRow key={n}>
                      <Expander><TreeChevron /></Expander>
                      <NodeLabel $selected={i === 0}>
                        <Folder open={i === 0} />
                        <span>{n}</span>
                      </NodeLabel>
                    </TreeRow>
                  ))}
                </TreeRows>
                <ScrollTrack>
                  <ScrollArrow><Chevron /></ScrollArrow>
                  <ScrollThumb />
                  <ScrollRest />
                  <ScrollArrow><Chevron down /></ScrollArrow>
                </ScrollTrack>
              </TreeList>
            </SideTabBody>
          </LeftPane>
          <RightPane>
            <MiniToolbar>
              <WiringIconGreen />
              <MiniSep />
              <Pin><PinIcon /></Pin>
            </MiniToolbar>
            <DocTabs>
              <DocTab $active $w={53}>Diagram</DocTab>
              <DocTab $w={101}>Annotated Diagram</DocTab>
              <DocTab $w={54}>Summary</DocTab>
            </DocTabs>
            <DocPanel>
              <DocInner>
                <DiagramArea>
                  <LeftWires />
                  <Board>
                    {rows.map(i => (
                      <Cell key={`a${i}`} $row={i}>
                        <Screw><ScrewGlyph /></Screw>
                        <CellLabel>{leftLabels[i]}</CellLabel>
                      </Cell>
                    ))}
                    <Gap />
                    {rows.map(i => <Cell key={`b${i}`} $row={i} />)}
                    <Gap />
                    {rows.map(i => <Cell key={`c${i}`} $row={i} />)}
                    <Gap />
                    {rows.map(i => (
                      <Cell key={`d${i}`} $row={i}>
                        {i === 0 && <Screw><ScrewGlyph /></Screw>}
                      </Cell>
                    ))}
                    {rows.map(i => (
                      <Cell key={`e${i}`} $row={i} $flip $noRight $black={i === 6 || i === 7} $sepGrey={i === 6}>
                        <CellLabel $flip>{rightLabels[i]}</CellLabel>
                        <Screw><ScrewGlyph /></Screw>
                      </Cell>
                    ))}
                  </Board>
                  <RightWires />
                </DiagramArea>
                <InfoPanel>
                  <InfoRow>
                    <InfoLabel>Module Type:</InfoLabel>
                    <span>CT Input</span>
                  </InfoRow>
                  <InfoRow>
                    <InfoLabel>CT Enable:</InfoLabel>
                    <Select>
                      <span>No (0)</span>
                      <SelectArrow />
                    </Select>
                  </InfoRow>
                </InfoPanel>
              </DocInner>
            </DocPanel>
          </RightPane>
        </Work>
        <Dock>
          <DockSide>
            <DockClose><CloseMini /></DockClose>
            <DockGrip />
          </DockSide>
          <DockBody>
            <DeviceFrame>
              <DeviceThumb />
            </DeviceFrame>
          </DockBody>
        </Dock>
        <StatusBar>
          <StatusCell $w={140} $pad={23}>Level 2 (Engineer)</StatusCell>
          <StatusCell $w={140} $pad={32}>EPC3004 V5.20</StatusCell>
          <StatusCell $w={700} $pad={147} $plain>SIMULATION._DESKTOP-VL7KJFMCloneFile3 - Terminal Wiring Editor</StatusCell>
        </StatusBar>
      </Window>
    </Desktop>
    <Taskbar>
      <StartButton><WinLogo /></StartButton>
      <SearchBox>
        <SearchGlass />
        <span>Type here to search</span>
      </SearchBox>
      {taskIcons.map(([name, running, active]) => (
        <TaskIcon key={name} $running={running} $active={active}>
          <TaskGlyph name={name} />
        </TaskIcon>
      ))}
      <Tray>
        <TraySlot $w={24}><TrayUp /></TraySlot>
        <TraySlot $w={24}><TrayBattery /></TraySlot>
        <TraySlot $w={24}><TraySpeaker /></TraySlot>
        <TraySlot $w={34}>ENG</TraySlot>
        <Clock>11:55<br />12-05-2022</Clock>
        <TraySlot $w={40}><TrayNotes /></TraySlot>
        <ShowDesktop />
      </Tray>
    </Taskbar>
  </Page>
)

export default App
